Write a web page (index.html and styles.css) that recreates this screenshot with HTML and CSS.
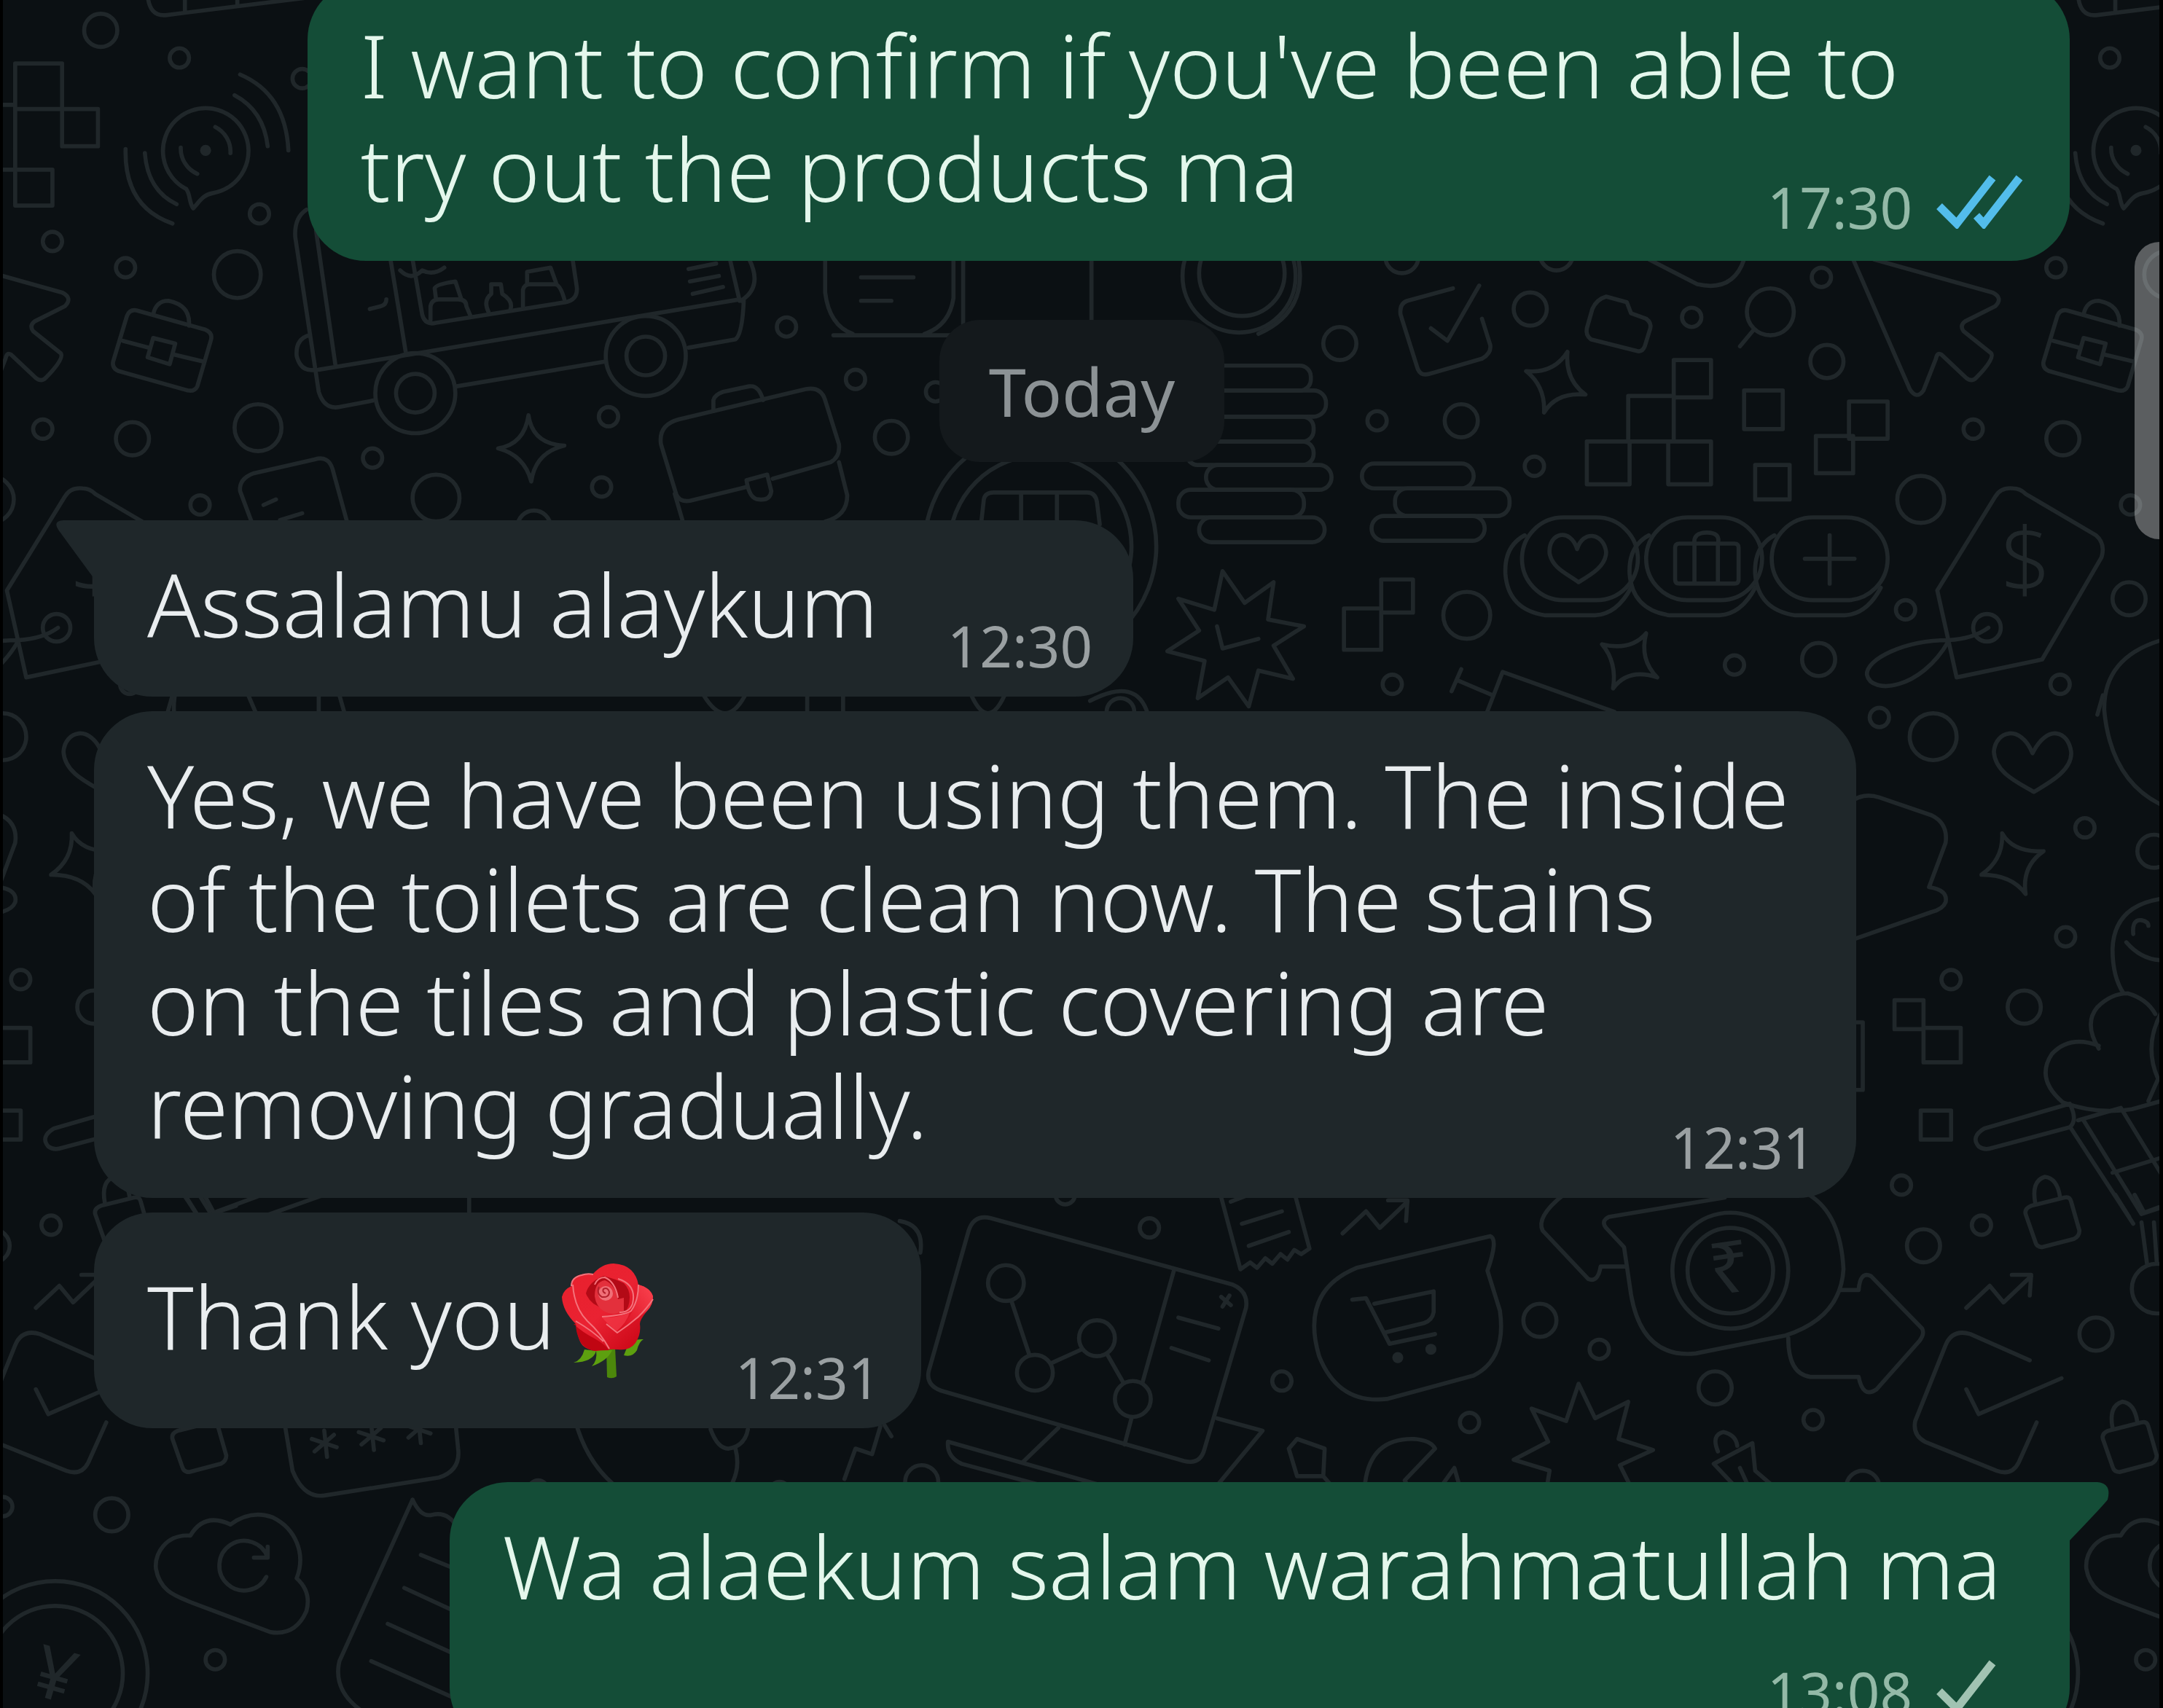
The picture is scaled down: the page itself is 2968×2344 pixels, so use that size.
FILE: index.html
```html
<!DOCTYPE html>
<html lang="en">
  <head>
    <meta charset="UTF-8" />
    <meta name="viewport" content="width=device-width, initial-scale=1.0" />
    <title>Chat</title>
    <link rel="stylesheet" href="styles.css">
  </head>
  <body>
    <svg class="wallpaper" viewBox="0 0 1568 1238" preserveAspectRatio="xMinYMin slice" aria-hidden="true">
      <defs>
        <g id="lock">
          <path d="M1472 874L1496 868Q1500 867 1501 871L1507 892Q1507 896 1503 898L1480 904Q1476 904 1475 900L1468 880Q1467 876 1472 874Z" />
          <path d="M1475 872Q1472 856 1482 853Q1491 854 1493 868" />
        </g>
        <g id="trend">
          <path d="M1425 948L1442 932L1452 944L1472 925M1458 924L1472 924L1471 939" />
        </g>
        <g id="pill">
          <rect x="1103" y="375" width="84" height="60" rx="30" />
          <path d="M1105 388Q1090 396 1091 416Q1093 442 1120 446H1156Q1172 445 1182 426" />
        </g>
        <g id="asterisk">
          <path d="M-9 -3L9 3M-7 6L7 -6M0 -9L2 10" />
        </g>

        <g id="tile">
          <!-- small circles -->
          <g>
            <circle cx="130" cy="42" r="7" /><circle cx="188" cy="155" r="7" />
            <circle cx="38" cy="175" r="7" /><circle cx="91" cy="194" r="7" />
            <circle cx="31" cy="311" r="7" /><circle cx="270" cy="332" r="7" />
            <circle cx="441" cy="302" r="7" /><circle cx="436" cy="353" r="7" />
            <circle cx="145" cy="366" r="7" /><circle cx="219" cy="57" r="7" />
            <circle cx="570" cy="237" r="7" /><circle cx="620" cy="275" r="7" />
            <circle cx="678" cy="284" r="7" /><circle cx="998" cy="305" r="7" />
            <circle cx="1320" cy="201" r="7" /><circle cx="1226" cy="230" r="7" />
            <circle cx="1112" cy="338" r="7" /><circle cx="1257" cy="482" r="7" />
            <circle cx="1381" cy="442" r="7" /><circle cx="1493" cy="496" r="7" />
            <circle cx="1362" cy="520" r="7" /><circle cx="1009" cy="496" r="7" />
            <circle cx="1511" cy="600" r="7" /><circle cx="1497" cy="679" r="7" />
            <circle cx="1414" cy="710" r="7" /><circle cx="1378" cy="859" r="7" />
            <circle cx="37" cy="888" r="7" /><circle cx="1159" cy="978" r="7" />
            <circle cx="1314" cy="1029" r="7" /><circle cx="1065" cy="1031" r="7" />
            <circle cx="156" cy="1203" r="7" /><circle cx="833" cy="890" r="7" />
            <circle cx="929" cy="1001" r="7" /><circle cx="772" cy="866" r="7" />
            <circle cx="2" cy="1092" r="7" /><circle cx="390" cy="1080" r="7" />
            <circle cx="565" cy="1081" r="7" />
          </g>
          <!-- medium circles -->
          <g>
            <circle cx="73" cy="22" r="12" /><circle cx="96" cy="318" r="12" />
            <circle cx="387" cy="382" r="12" />
            <circle cx="646" cy="317" r="12" /><circle cx="971" cy="249" r="12" />
            <circle cx="1109" cy="224" r="12" /><circle cx="1059" cy="305" r="12" />
            <circle cx="1324" cy="262" r="12" /><circle cx="1318" cy="478" r="12" />
            <circle cx="1543" cy="434" r="12" /><circle cx="1016" cy="186" r="12" />
            <circle cx="1128" cy="184" r="12" /><circle cx="1467" cy="730" r="12" />
            <circle cx="1561" cy="617" r="12" /><circle cx="1394" cy="903" r="12" />
            <circle cx="1116" cy="957" r="12" /><circle cx="1243" cy="1006" r="12" />
            <circle cx="1519" cy="967" r="12" /><circle cx="1350" cy="1078" r="12" />
            <circle cx="668" cy="1074" r="12" /><circle cx="81" cy="1098" r="12" />
          </g>
          <!-- large circles -->
          <g>
            <circle cx="172" cy="199" r="17" /><circle cx="187" cy="310" r="17" />
            <circle cx="316" cy="361" r="17" /><circle cx="1392" cy="362" r="17" />
            <circle cx="1063" cy="446" r="17" /><circle cx="1401" cy="534" r="17" />
            <circle cx="1563" cy="934" r="18" />
          </g>

          <!-- pixel blocks -->
          <path d="M11 46H45V79H11ZM45 79H71V106H45ZM11 79V123M0 76H11M0 123H11M11 123H38V149H11Z" />
          <path d="M1213 261H1240V288H1213ZM1180 287H1213V320H1180ZM1150 320H1181V351H1150ZM1209 320H1240V351H1209Z" />
          <path d="M1264 283H1292V311H1264ZM1272 337H1297V362H1272ZM1340 291H1368V318H1340ZM1316 316H1343V343H1316Z" />
          <path d="M974 441H1001V471H974ZM1001 420H1024V444H1001Z" />
          <path d="M1373 725H1394V746H1373ZM1394 745H1421V770H1394ZM1392 805H1414V826H1392ZM1335 741H1350V790H1335Z" />

          <!-- voice bubble -->
          <path d="M154 140A31 31 0 1 0 135 137C138 141 137 147 140 151C144 147 147 141 154 140Z" />
          <circle class="solid" cx="149" cy="109" r="4" />
          <path d="M156 92A20 20 0 0 1 167 111M131 107A20 20 0 0 0 143 126M170 69Q191 80 194 106M174 54Q207 68 209 109M105 111Q107 138 128 148M91 108Q90 150 125 162" />

          <!-- cursor -->
          <path d="M1358 188L1444 212Q1452 216 1446 222L1424 233Q1420 236 1423 240L1443 256Q1446 260 1432 274Q1429 277 1425 274L1407 257Q1404 255 1403 260L1394 283Q1389 290 1384 282L1343 188" />

          <!-- small briefcase -->
          <path d="M99 225L149 239Q154 241 153 246L143 280Q141 284 136 283L86 269Q81 267 82 262L92 229Q94 224 99 225Z" />
          <path d="M111 228Q113 218 122 218Q138 221 137 236M89 247L108 252M126 257L147 262M111 245L127 249L123 264L107 259Z" />

          <!-- food truck -->
          <path d="M222 152Q213 158 214 172L231 284Q235 297 246 295L272 290M229 167L243 264M283 188L294 255M224 243Q214 246 215 258Q218 270 229 268M231 268L536 217" />
          <circle cx="301" cy="285" r="29" /><circle cx="301" cy="285" r="14" />
          <circle cx="468" cy="258" r="29" /><circle cx="468" cy="258" r="14" />
          <path d="M331 280L439 262M499 252L533 246Q538 242 539 218M529 188L536 218M543 188Q553 208 537 218" />
          <path d="M299 188L306 228Q308 236 316 234L410 219Q419 217 418 208L415 188" />
          <path d="M312 232V222Q313 217 318 217H332Q338 217 338 222L341 229M316 217L315 209Q316 206 330 204L334 216M354 226Q350 218 356 213L356 206H363L364 213Q372 218 370 224M379 222L379 210Q380 206 384 206H402Q406 206 409 217M382 206L382 197L399 194L403 205M290 196Q298 204 306 196Q314 200 322 194" />
          <path d="M268 224L276 222Q280 221 280 217M499 195L519 191M500 204L521 200M502 213L524 208" />

          <!-- sparkles -->
          <path d="M383 301Q386 322 409 323Q388 328 385 349Q380 330 361 325Q380 322 383 301Z" />
          <path d="M1136 255Q1134 275 1149 286Q1128 284 1119 299Q1120 280 1106 269Q1126 271 1136 255Z" />
          <path d="M1193 459Q1188 478 1201 491Q1180 484 1169 499Q1172 480 1161 467Q1182 472 1193 459Z" />
          <path d="M1451 604Q1459 618 1481 617Q1465 628 1468 648Q1458 634 1436 634Q1452 623 1451 604Z" />

          <!-- big briefcase -->
          <path d="M541 353L500 363Q492 364 490 358L479 322Q477 308 492 304L584 282Q595 280 598 290L608 322Q609 331 602 335L560 347M489 358L496 382M608 335L614 359Q614 374 598 378M517 298V290Q518 286 524 284L543 280Q550 279 553 290" />
          <path d="M541 348L556 344L559 356Q558 363 550 362Q543 362 541 348Z" />

          <!-- note card -->
          <path d="M183 380L174 356Q173 347 184 343L228 333Q238 330 241 340L252 380M191 366L200 362M203 377L219 372" />

          <!-- notepad -->
          <path d="M598 188V212Q601 236 618 242M691 188V216Q688 236 670 242M604 243H690M698 188V236M791 188V236M624 201H662M624 218H646" />
          <circle cx="898" cy="200" r="41" /><circle cx="900" cy="198" r="31" />
          <path d="M941 188Q948 226 912 242" />

          <!-- globe -->
          <circle cx="754" cy="396" r="84" /><circle cx="754" cy="396" r="66" />
          <path d="M711 380L713 362Q714 357 720 357H788Q794 357 795 364L797 380M740 357V380M766 357V380" />

          <!-- coin stacks -->
          <rect x="860" y="265" width="90" height="18" rx="8" />
          <rect x="860" y="283" width="101" height="19" rx="9" />
          <rect x="860" y="302" width="92" height="18" rx="8" />
          <rect x="860" y="320" width="92" height="17" rx="8" />
          <rect x="874" y="337" width="91" height="18" rx="9" />
          <rect x="854" y="355" width="91" height="20" rx="9" />
          <rect x="869" y="375" width="91" height="18" rx="9" />
          <rect x="987" y="336" width="81" height="18" rx="9" />
          <rect x="1011" y="354" width="83" height="20" rx="9" />
          <rect x="994" y="374" width="82" height="18" rx="9" />

          <!-- badges -->
          <path d="M886 414L902 437L923 422L919 449L945 454L923 468L937 492L912 486L905 512L890 491L868 506L873 479L846 472L869 457L854 434L880 442ZM882 454L886 470L912 463" />
          <path d="M1121 1078L1123 1066L1097 1058L1122 1045L1110 1021L1135 1030L1144 1003L1156 1028L1180 1016L1173 1043L1198 1051L1174 1062L1182 1078" />

          <!-- tick boxes -->
          <path d="M1053 209L1020 218Q1014 220 1015 228L1027 266Q1029 273 1036 271L1074 260Q1081 256 1080 250L1074 231M1037 238L1049 247L1072 207" />
          <path d="M1471 986L1428 967Q1415 963 1410 975L1388 1030Q1386 1040 1395 1045L1447 1066Q1458 1070 1463 1060L1476 1031M1425 1007L1434 1025L1494 999" />

          <!-- folder, magnifier -->
          <path d="M1154 224Q1157 217 1164 215L1179 219L1182 227L1193 231Q1197 234 1196 238L1192 251Q1190 256 1185 254L1153 246Q1149 243 1150 238Z" />
          <circle cx="1283" cy="226" r="17" />
          <path d="M1271 239L1261 251M1195 188L1230 206Q1256 212 1264 188" />

          <!-- pills -->
          <use href="#pill" />
          <use href="#pill" x="90" />
          <use href="#pill" x="181" />
          <path d="M1143 398C1138 382 1122 386 1123 401C1125 412 1136 416 1144 422C1154 416 1164 410 1164 400C1162 386 1147 384 1143 398Z" />
          <path d="M1217 394H1257Q1260 394 1260 397V420Q1260 423 1257 423H1217Q1214 423 1214 420V397Q1214 394 1217 394ZM1228 394V423M1245 394V423M1228 394Q1227 386 1237 386Q1247 386 1245 394M1326 388V423M1308 405H1344" />

          <!-- price tag -->
          <path d="M1446 360Q1450 353 1459 354Q1464 354 1468 358L1519 388Q1526 394 1523 404L1480 478L1418 491L1404 428Z" />
          <circle cx="1440" cy="455" r="10" />
          <path d="M1441 455Q1430 463 1412 464C1380 464 1352 478 1353 489C1356 504 1392 500 1412 465" />
          <text class="coin-sign dollar" x="1468" y="429">$</text>

          <!-- flag -->
          <path d="M1059 485L1052 501M1056 493L1082 504M1077 518L1089 487L1170 516" />

          <!-- gap lines between bubbles -->
          <path d="M125 504L121 518M180 504L186 518M231 504V518M246 504L250 518M510 504Q526 530 540 504M585 504V518M611 504V518M704 504Q716 530 728 504M790 508Q824 490 832 518" />
          <circle cx="812" cy="516" r="10" />
          <path d="M134 866L144 882M148 866L155 879L190 866M190 882L235 866M340 866V882" />

          <!-- balloon, heart, banner -->
          <path d="M1570 463Q1524 475 1525 515Q1530 568 1570 585" />
          <path d="M1473 546C1464 524 1446 530 1445 545C1446 560 1462 567 1474 574C1486 567 1502 558 1501 545C1499 530 1484 524 1473 546Z" />
          <path d="M1340 582Q1350 574 1362 578L1400 591Q1412 597 1410 611L1398 643Q1412 645 1410 654Q1408 659 1400 661L1340 682" />

          <!-- smiley and big heart -->
          <path d="M1570 651Q1532 655 1531 688Q1531 708 1539 720M1546 677Q1545 666 1552 667Q1557 668 1557 671M1541 683Q1553 697 1570 696" />
          <path d="M1521 760Q1510 742 1520 730Q1530 720 1542 720Q1556 724 1562 735M1521 758Q1500 750 1487 764Q1475 782 1495 799Q1520 808 1545 804L1570 797M1570 728Q1552 755 1564 782L1557 798" />

          <!-- pool net -->
          <path d="M1500 800L1438 818Q1428 824 1434 831Q1438 834 1444 832L1500 817Q1506 812 1500 800ZM1501 818L1546 887M1510 812L1552 880L1570 874M1506 812L1537 803L1570 857M1531 850L1570 838M1552 886L1556 916M1561 886L1563 914" />

          <use href="#lock" />
          <use href="#lock" x="56" y="163" />
          <use href="#trend" />
          <use href="#trend" x="-452" y="-54" />

          <!-- rupee bubble with arrows -->
          <path d="M1133 866Q1113 882 1118 892L1151 927Q1158 930 1160 918H1179" />
          <path d="M1250 868L1166 882Q1160 885 1164 890L1177 904L1182 938Q1190 985 1229 981L1294 968Q1334 955 1336 920Q1334 880 1311 866" />
          <path d="M1334 935H1347Q1348 921 1356 925L1393 963Q1395 967 1391 972L1360 1007Q1350 1014 1347 998H1312Q1296 996 1296 970" />
          <circle cx="1254" cy="921" r="42" /><circle cx="1254" cy="921" r="31" />
          <text class="coin-sign" x="1254" y="937" transform="rotate(-8 1254 921)">₹</text>

          <!-- plug -->
          <path d="M1245 1052Q1240 1040 1249 1038Q1258 1040 1259 1048M1258 1078L1242 1061L1270 1046L1272 1066L1286 1078M1261 1064L1266 1075" />

          <!-- sync cloud -->
          <path d="M138 1113C120 1112 112 1126 113 1137C116 1154 128 1157 140 1162L196 1183Q214 1186 222 1168Q226 1154 215 1144C222 1126 214 1108 198 1100Q182 1094 167 1105Q148 1096 138 1113Z" />
          <path d="M194 1129A18 18 0 1 0 193 1143M184 1129H194V1121" />

          <!-- yen coin -->
          <circle cx="40" cy="1213" r="67" /><circle cx="40" cy="1213" r="49" />
          <text class="coin-sign" x="40" y="1232" transform="rotate(16 40 1213)">¥</text>

          <!-- torn list -->
          <path d="M299 1087L246 1204Q241 1225 262 1240M299 1087Q305 1100 313 1098Q325 1095 332 1108M305 1127L332 1138M293 1151L332 1169M281 1177L332 1200M269 1204L332 1232" />

          <!-- password card -->
          <path d="M206 1030L212 1066Q220 1086 235 1084L318 1071Q334 1066 332 1050L330 1030" />
          <use href="#asterisk" x="235" y="1046" />
          <use href="#asterisk" x="269" y="1041" />
          <use href="#asterisk" x="303" y="1036" />
          <path d="M417 1030Q425 1060 447 1078M515 1036Q520 1050 528 1050Q540 1048 542 1036M533 1050Q537 1065 529 1078M638 1034L632 1054L620 1050L612 1072M641 1033L646 1041M652 885Q670 888 667 908" />

          <!-- monitor -->
          <path d="M718 883L893 931Q905 936 903 948L873 1050Q870 1062 858 1059L682 1008Q671 1004 673 994L702 892Q706 880 718 883Z" />
          <circle cx="729" cy="930" r="13" /><circle cx="750" cy="995" r="13" />
          <circle cx="795" cy="970" r="13" /><circle cx="821" cy="1014" r="13" />
          <path d="M733 943L746 982M762 988L784 978M802 981L814 1002M851 920L828 1002M820 1028L815 1047M854 955L883 963M849 977L876 986M885 940L892 946M891 939L886 947" />
          <path d="M767 1035L741 1060M687 1045L803 1078M687 1045Q686 1056 697 1061L760 1078M882 1028L915 1037L881 1078" />

          <!-- receipt -->
          <path d="M884 864L899 920L906 915L911 919L917 912L922 916L928 909L933 913L938 906L943 909L949 905L938 864M900 887L929 878M905 903L934 893M892 871L905 866" />

          <!-- cart bubble -->
          <path d="M983 919L1080 896Q1086 898 1078 921L1087 950Q1092 985 1068 997L1005 1014Q970 1018 956 983Q942 936 983 919Z" />
          <path d="M980 942L990 941L1007 974L1040 967M996 945L1039 936V951Q1038 957 1032 959L1003 966" />
          <circle class="solid" cx="1013" cy="984" r="4" /><circle class="solid" cx="1037" cy="978" r="4" />

          <!-- scraps above last bubble -->
          <path d="M940 1043L960 1050L959 1070H940L934 1050ZM959 1070L966 1078M989 1078Q992 1042 1025 1043Q1037 1044 1040 1050L1018 1073L1021 1078M1044 1078L1054 1064L1058 1078" />

          <!-- bus roof at the top -->
          <path d="M107 -4Q108 12 120 11L225 -2M134 -2V9M172 -2V3" />
        </g>
      </defs>
      <use href="#tile" x="-1399" />
      <use href="#tile" />
      <use href="#tile" x="1399" />
    </svg>

    <main class="chat">
      <article class="bubble sent wide">
        <p class="text">I want to confirm if you've been able to<br>try out the products ma</p>
        <div class="meta">
          <time>17:30</time>
          <svg class="ticks read" viewBox="0 0 120 76" role="img" aria-label="Read">
            <path d="M5 45L29 69L78 6M56 58L66 69L115 6" />
          </svg>
        </div>
      </article>

      <div class="day">Today</div>

      <article class="bubble received short first">
        <p class="text">Assalamu alaykum</p>
        <div class="meta"><time>12:30</time></div>
        <svg class="tail" viewBox="0 0 54 80" aria-hidden="true">
          <path d="M54 0H12Q-3 1 5 13Q10 20 54 80Z" />
        </svg>
      </article>

      <article class="bubble received wide">
        <p class="text">Yes, we have been using them. The inside<br>of the toilets are clean now. The stains<br>on the tiles and plastic covering are<br>removing gradually.</p>
        <div class="meta"><time>12:31</time></div>
      </article>

      <article class="bubble received short">
        <p class="text with-emoji">Thank you<svg class="emoji" viewBox="0 0 128 160" role="img" aria-label="Rose">
            <defs>
              <linearGradient id="petal" x1="0" y1="0" x2="1" y2="1">
                <stop offset="0" stop-color="#e8202c" />
                <stop offset="0.5" stop-color="#ea2232" />
                <stop offset="1" stop-color="#c30010" />
              </linearGradient>
              <linearGradient id="side" x1="1" y1="0" x2="0" y2="1">
                <stop offset="0" stop-color="#fb4450" />
                <stop offset="1" stop-color="#d80a1c" />
              </linearGradient>
            </defs>
            <path fill="#4c870b" d="M62 116H74L76 156Q70 160 63 157Z" />
            <path fill="#5da00f" d="M17 137Q28 134 32 119L48 121Q44 136 17 137ZM42 142Q50 134 48 120H70Q64 134 42 142ZM113 105Q98 104 92 112L86 127Q98 130 104 120Q107 108 113 105Z" />
            <path fill="url(#petal)" d="M1 47Q3 37 14 32Q16 18 28 16Q36 14 43 16Q56 1 72 1Q88 2 96 10Q104 18 106 30Q122 34 126 46Q126 58 118 66Q108 78 108 84Q110 98 102 110Q94 121 78 119Q64 118 47 121Q30 118 26 108Q22 98 20 84Q2 66 1 47Z" />
            <path fill="#c00512" d="M17 84Q30 96 46 104Q60 112 66 120Q54 120 46 121Q30 118 25 106Q20 94 20 84Z" />
            <path fill="url(#side)" d="M106 30Q122 34 126 46Q126 58 118 66Q100 80 76 94Q92 80 98 66Q106 50 106 30Z" />
            <path fill="#b30a16" d="M34 42Q38 26 58 18Q74 22 86 28Q98 40 92 60L88 68Q70 72 58 62Q40 58 34 42Z" />
            <path fill="#e3303c" d="M46 46Q46 26 60 24Q74 30 78 50L86 48V66Q72 74 58 66Q48 60 46 46Z" />
            <circle fill="#f07078" cx="61" cy="42" r="10" />
            <path class="fold" d="M61 42q-5 -2 -3 -6q6 -3 8 4q0 8 -10 7q-8 -5 -4 -14" />
            <path class="edge" d="M14 32Q14 20 28 17Q36 14 44 16M16 30Q18 62 36 80Q54 96 66 118M106 30Q106 52 96 66Q88 72 56 74M78 22Q104 30 98 56Q94 68 80 68M46 30Q50 20 60 20Q74 26 78 48M20 80Q44 94 58 108M126 50Q118 62 106 74Q92 86 77 96L62 84" />
            <path fill="#f43a48" opacity="0.7" d="M56 75Q80 76 94 68Q90 82 76 94Q68 88 56 75Z" />
          </svg></p>
        <div class="meta"><time>12:31</time></div>
      </article>

      <article class="bubble sent stacked first">
        <p class="text">Wa alaekum salam warahmatullah ma</p>
        <div class="meta">
          <time>13:08</time>
          <svg class="ticks" viewBox="0 0 120 76" role="img" aria-label="Sent">
            <path d="M5 45L29 69L78 6" />
          </svg>
        </div>
        <svg class="tail" viewBox="0 0 54 80" aria-hidden="true">
          <path d="M0 0H38Q58 2 52 24Q48 30 0 80Z" />
        </svg>
      </article>
    </main>

    <div class="scroll-thumb"></div>
  </body>
</html>
```
FILE: styles.css
```css
body {
  margin: 0;
  height: 100vh;
  overflow: hidden;
  position: relative;
  box-sizing: border-box;
  background-color: #0b1013;
  border-left: 4px solid #000;
  border-right: 5px solid #000;
  font-family: "Noto Sans", sans-serif;
  font-weight: 300;
}

/* Wallpaper */

.wallpaper {
  position: absolute;
  top: 0;
  left: -4px;
  width: 100vw;
  height: 100%;
  fill: none;
  stroke: #20272a;
  stroke-width: 3;
  stroke-linecap: round;
  stroke-linejoin: round;
}

.wallpaper .solid {
  fill: #20272a;
  stroke: none;
}

.coin-sign {
  fill: #20272a;
  stroke: none;
  font-size: 52px;
  font-weight: 400;
  text-anchor: middle;
}

.coin-sign.dollar {
  font-size: 64px;
  font-weight: 300;
}

/* Messages */

.chat {
  position: relative;
  display: flex;
  flex-direction: column;
  align-items: flex-start;
  gap: 20px;
  margin-top: -26px;
  padding: 0 123px 0 125px;
}

.bubble {
  position: relative;
  display: grid;
  box-sizing: border-box;
  padding: 44px 56px 56px 73px;
  border-radius: 80px;
}

.received {
  background-color: #1f272a;
}

.sent {
  align-self: flex-end;
  background-color: #144d37;
  padding-right: 64px;
}

.wide {
  width: 89.2%;
}

.text {
  grid-area: 1 / 1;
  margin: 0;
  color: #e9edef;
  font-size: 120px;
  line-height: 142px;
}

.sent .text {
  color: #e4f7ec;
}

.short .text {
  padding-right: 294px;
}

.stacked {
  margin-top: 54px;
}

.stacked .text {
  padding: 0 30px 120px 0;
}

.text.with-emoji {
  line-height: 196px;
}

.emoji {
  width: 128px;
  height: 160px;
  margin: 0 16px 0 8px;
  vertical-align: -41px;
}

.edge {
  fill: none;
  stroke: #f4737c;
  stroke-width: 2;
}

.fold {
  fill: none;
  stroke: #b3202c;
  stroke-width: 2;
}

/* Time and ticks */

.meta {
  grid-area: 1 / 1;
  align-self: end;
  justify-self: end;
  display: flex;
  align-items: flex-end;
  gap: 32px;
  margin-bottom: -26px;
  color: #9aa0a2;
  font-size: 78px;
  font-weight: 400;
  line-height: 80px;
}

.sent .meta {
  margin-bottom: -22px;
  color: #93b9a7;
}

.ticks {
  width: 120px;
  height: 76px;
  margin-bottom: 10px;
  fill: none;
  stroke: #a1c3b2;
  stroke-width: 11;
}

.ticks.read {
  stroke: #53bdeb;
}

/* Bubble tails */

.tail {
  position: absolute;
  top: 0;
  width: 54px;
  height: 80px;
}

.received.first {
  border-top-left-radius: 0;
}

.received .tail {
  right: 100%;
  fill: #1f272a;
}

.sent.first {
  border-top-right-radius: 0;
}

.sent .tail {
  left: 100%;
  fill: #144d37;
}

/* Day label */

.day {
  align-self: center;
  margin: 61px 0 60px;
  padding: 38px 68px 37px;
  border-radius: 56px;
  background-color: #14191c;
  color: #8c9295;
  font-size: 92px;
  font-weight: 400;
  line-height: 120px;
}

/* Scrollbar */

.scroll-thumb {
  position: absolute;
  top: 332px;
  right: 0;
  width: 34px;
  height: 408px;
  border-radius: 34px 0 0 34px;
  background-color: rgba(255, 255, 255, 0.33);
}
```
